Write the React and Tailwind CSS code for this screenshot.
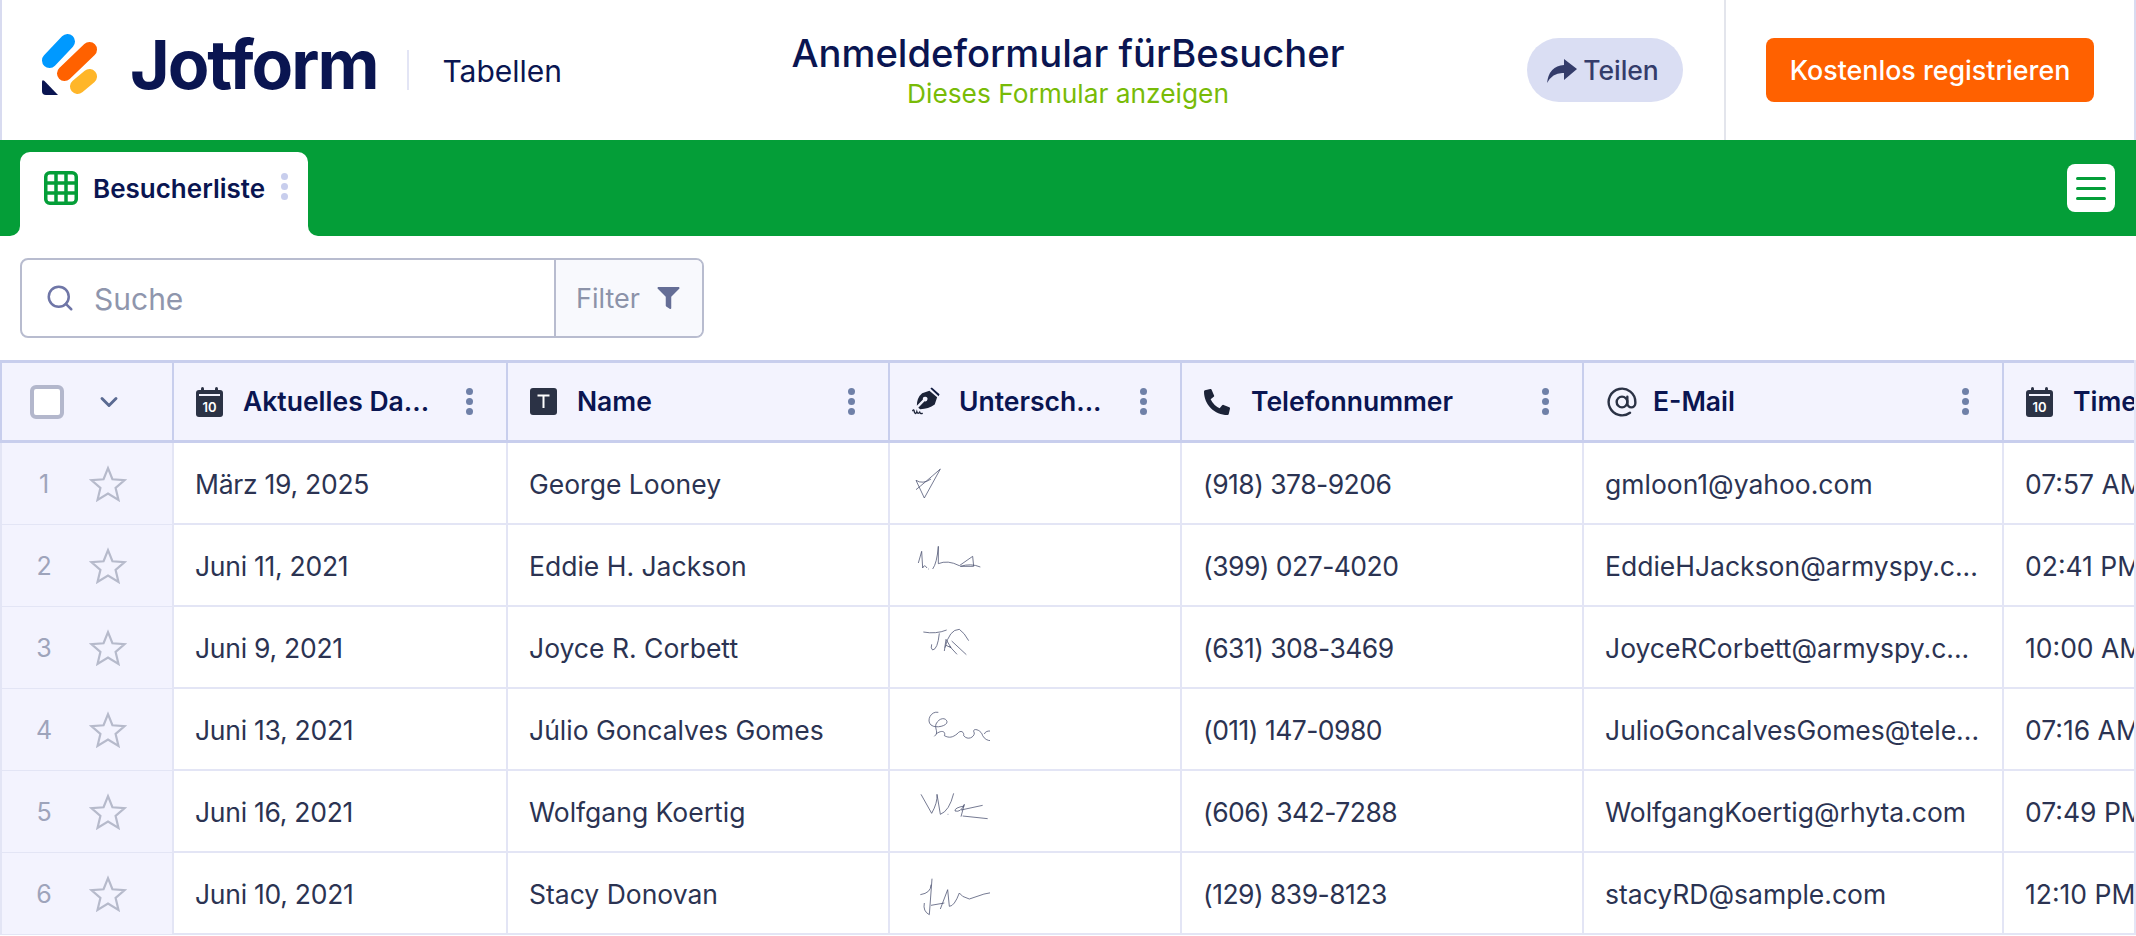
import React from "react";
import { Search, ChevronDown, AtSign } from "lucide-react";
import { FaFilter, FaPhoneAlt } from "react-icons/fa";

const gridCols = "grid grid-cols-[172px_334px_382px_292px_402px_420px_300px]";

const rows = [
  { date: "März 19, 2025", name: "George Looney", phone: "(918) 378-9206", email: "gmloon1@yahoo.com", time: "07:57 AM", sigBox: "27 10 300 243", sig: "M178 88 L130 175 L105 122 Q125 135 150 118 M105 150 Q130 130 178 88" },
  { date: "Juni 11, 2021", name: "Eddie H. Jackson", phone: "(399) 027-4020", email: "EddieHJackson@armyspy.c...", time: "02:41 PM", sigBox: "27 256 300 243", sig: "M112 370 L122 335 L125 385 Q130 372 138 385 M141 388 L143 388 M155 388 Q168 370 172 320 L172 372 Q200 360 235 378 L275 350 L278 380 L238 380 Q270 370 298 382" },
  { date: "Juni 9, 2021", name: "Joyce R. Corbett", phone: "(631) 308-3469", email: "JoyceRCorbett@armyspy.c...", time: "10:00 AM", sigBox: "27 503 300 243", sig: "M127 578 Q165 585 197 572 M175 582 Q170 630 155 632 Q148 628 152 615 M190 635 L195 600 L210 625 L195 618 M205 620 L228 645 M192 625 Q205 570 235 570 Q250 580 263 604 M212 605 L256 646" },
  { date: "Juni 13, 2021", name: "Júlio Goncalves Gomes", phone: "(011) 147-0980", email: "JulioGoncalvesGomes@tele...", time: "07:16 AM", sigBox: "27 30 300 243", sig: "M172 100 C150 95 135 125 150 138 C165 150 200 140 198 128 C195 115 175 115 165 135 C160 150 175 160 160 172 M165 165 C185 150 195 160 190 170 C205 178 215 175 228 165 C240 150 250 160 248 170 C260 185 280 175 280 162 C270 145 300 150 305 170 C315 190 345 190 348 170 C345 155 315 150 310 165" },
  { date: "Juni 16, 2021", name: "Wolfgang Koertig", phone: "(606) 342-7288", email: "WolfgangKoertig@rhyta.com", time: "07:49 PM", sigBox: "27 275 300 243", sig: "M120 345 L152 402 Q170 370 168 345 L178 405 Q205 395 218 342 M200 405 L202 405 M250 380 Q220 385 222 395 Q240 400 250 375 L240 412 M240 392 L305 378 M245 410 L320 418" },
  { date: "Juni 10, 2021", name: "Stacy Donovan", phone: "(129) 839-8123", email: "stacyRD@sample.com", time: "12:10 PM", sigBox: "27 520 300 243", sig: "M153 597 L145 705 Q125 695 130 670 M118 645 Q150 640 150 615 M150 677 L190 670 M178 688 L200 630 L205 680 Q220 680 235 640 L245 650 L265 658 Q310 640 350 635" },
];

const Logo = () => (
  <svg viewBox="0 0 55 61" className="w-[55px] h-[61px] shrink-0">
    <line x1="7.5" y1="26.5" x2="25.5" y2="7.5" stroke="#0099ff" strokeWidth="15" strokeLinecap="round" />
    <line x1="22.5" y1="39.5" x2="47.5" y2="15.5" stroke="#ff6100" strokeWidth="15" strokeLinecap="round" />
    <line x1="35.5" y1="52.5" x2="47.5" y2="42.5" stroke="#ffb629" strokeWidth="15" strokeLinecap="round" />
    <path d="M0 48 Q0 45 2.500 47 L16 61 H4 Q0 61 0 57 Z" fill="#0a1551" />
  </svg>
);

const CalendarIcon = () => (
  <svg viewBox="0 0 27 30" className="w-[27px] h-[30px] shrink-0">
    <rect x="0" y="3" width="27" height="27" rx="3" fill="#2b3245" />
    <rect x="5" y="0" width="3" height="6" rx="1.500" fill="#2b3245" />
    <rect x="19" y="0" width="3" height="6" rx="1.500" fill="#2b3245" />
    <rect x="3" y="7" width="21" height="2" fill="#f3f3fe" />
    <text x="13.500" y="25" textAnchor="middle" fontSize="13" fontWeight="600" fill="#fff" fontFamily="Inter, sans-serif">10</text>
  </svg>
);

const TextIcon = () => (
  <svg viewBox="0 0 27 27" className="w-[27px] h-[27px] shrink-0">
    <rect width="27" height="27" rx="3" fill="#2b3245" />
    <path d="M7.500 7.500 H19.500 M13.500 7.500 V20" stroke="#fff" strokeWidth="2" fill="none" />
  </svg>
);

const PenIcon = () => (
  <svg viewBox="0 0 30 30" className="w-[29px] h-[29px] shrink-0">
    <path d="M19 1.500 L20.500 0.500 L28.500 7.500 L27.500 9.500 Z" fill="#0f1a3f" />
    <path d="M18 4 L26 10.500 L23.500 18 Q17 22.500 8.500 23 L6.500 21.500 L13 14.800 A2.400 2.400 0 1 0 11.300 13 L5 19.500 Q5 11 10.500 6.500 Z" fill="#1c2338" />
    <path d="M0.500 25 Q2 22 2.500 26 Q4 29 5 25.500 Q6 28.500 8 26 Q9 28.500 11 27" stroke="#1c2338" strokeWidth="1.400" fill="none" />
  </svg>
);

const StarIcon = () => (
  <svg viewBox="0 0 24 24" className="w-[38px] h-[38px] shrink-0">
    <polygon
      points="12 2 14.800 9 22.500 9.600 16.800 14.500 18.600 22 12 18 5.400 22 7.200 14.500 1.500 9.600 9.200 9"
      fill="none"
      stroke="#b6bacb"
      strokeWidth="1.400"
    />
  </svg>
);

const Dots = ({ color = "bg-[#6f80a8]" }) => (
  <div className="flex flex-col gap-[3px] shrink-0">
    <span className={`w-[7px] h-[7px] rounded-full ${color}`} />
    <span className={`w-[7px] h-[7px] rounded-full ${color}`} />
    <span className={`w-[7px] h-[7px] rounded-full ${color}`} />
  </div>
);

const HeadCell = ({ icon, label }) => (
  <div className="flex items-center pl-[22px] pr-[33px] border-r-2 border-[#c8ceed] overflow-hidden">
    <div className="w-[47px] shrink-0">{icon}</div>
    <span className="flex-1 text-[26.5px] font-semibold text-[#0a1551] whitespace-nowrap">{label}</span>
    <Dots />
  </div>
);

const Cell = ({ children, className = "" }) => (
  <div className={`flex items-center pl-[21px] pt-[3px] border-r-2 border-[#e3e5f5] text-[26.5px] text-[#2b3352] whitespace-nowrap overflow-hidden ${className}`}>
    {children}
  </div>
);

const App = () => {
  return (
    <div className="w-[2136px] h-[936px] overflow-hidden bg-white font-['Inter',sans-serif]">
      {/* top bar */}
      <header className="h-[140px] grid grid-cols-[1fr_auto_1fr] items-center border-x-2 border-[#d8dbf0]">
        <div className="flex items-center pl-10 pb-3">
          <Logo />
          <span className="ml-[33px] text-[68px] font-bold leading-none tracking-[-0.03em] text-[#0a1551]">Jotform</span>
          <span className="ml-[30px] mt-[12px] w-[2px] h-10 bg-[#e3e5f5]" />
          <span className="ml-[33px] mt-[14px] text-[30px] text-[#0a1551]">Tabellen</span>
        </div>
        <div className="flex flex-col items-center gap-1 pb-[1px]">
          <span className="text-[38.2px] leading-[44px] font-medium text-[#0a1551]">Anmeldeformular fürBesucher</span>
          <span className="text-[26.3px] leading-[30px] text-[#78bb07]">Dieses Formular anzeigen</span>
        </div>
        <div className="flex items-center justify-end h-full">
          <button className="flex items-center justify-center gap-[6px] w-[156px] h-16 pr-1 pt-[1px] rounded-full bg-[#dadef3] text-[26.5px] font-medium text-[#343c6a]">
            <svg viewBox="0 0 30 24" className="w-[30px] h-6 shrink-0">
              <path d="M17 0 L30 10 L17 21 L17 14 Q6 13 0 24 Q2 7 17 6 Z" fill="#343c6a" />
            </svg>
            Teilen
          </button>
          <span className="ml-[41px] w-[2px] h-full bg-[#e3e5ec]" />
          <button className="ml-[40px] mr-[40px] w-[328px] h-16 rounded-lg bg-[#ff6100] text-[26.8px] font-medium text-white">
            Kostenlos registrieren
          </button>
        </div>
      </header>

      {/* green tab bar */}
      <div className="h-24 bg-[#049e38] flex items-end justify-between pl-5 pr-[21px]">
        <div className="relative w-[288px] h-[84px] bg-white rounded-t-[10px] flex items-center gap-[15px] pl-6 pb-[12px]">
          <span className="absolute -left-[10px] bottom-0 w-[10px] h-[10px] bg-white">
            <span className="block w-full h-full bg-[#049e38] rounded-br-[10px]" />
          </span>
          <span className="absolute -right-[10px] bottom-0 w-[10px] h-[10px] bg-white">
            <span className="block w-full h-full bg-[#049e38] rounded-bl-[10px]" />
          </span>
          <svg viewBox="0 0 34 34" className="w-[34px] h-[34px] shrink-0">
            <rect x="1.750" y="1.750" width="30.500" height="30.500" rx="4" fill="none" stroke="#049e38" strokeWidth="3.500" />
            <path d="M12 2 V32 M22 2 V32 M2 12 H32 M2 22 H32" stroke="#049e38" strokeWidth="3.500" />
          </svg>
          <span className="text-[26px] font-semibold text-[#0a1551]">Besucherliste</span>
          <div className="absolute right-5 top-[21px]">
            <Dots color="bg-[#c8ceed]" />
          </div>
        </div>
        <button className="mb-6 w-12 h-12 rounded-lg bg-white flex flex-col items-center justify-center gap-[7px]">
          <span className="w-[30px] h-[3px] rounded-full bg-[#049e38]" />
          <span className="w-[30px] h-[3px] rounded-full bg-[#049e38]" />
          <span className="w-[30px] h-[3px] rounded-full bg-[#049e38]" />
        </button>
      </div>

      {/* search */}
      <div className="h-[124px] pt-[22px] pl-5">
        <div className="w-[684px] h-[80px] flex rounded-lg border-2 border-[#b8bccf] overflow-hidden">
          <div className="flex-1 flex items-center pl-[23px] gap-[19px]">
            <Search className="w-[30px] h-[30px] text-[#6f76a7]" strokeWidth={2} />
            <span className="pt-[2px] text-[30px] text-[#8f96ad]">Suche</span>
          </div>
          <div className="w-[148px] bg-[#f8f9fd] border-l-2 border-[#b8bccf] flex items-center pl-[20px] gap-[17px]">
            <span className="pt-[2px] text-[27px] text-[#8c93a9]">Filter</span>
            <FaFilter className="w-[23px] h-[22px] text-[#656e96]" />
          </div>
        </div>
      </div>

      {/* table */}
      <div className="overflow-hidden border-r-2 border-[#e3e5f5]">
        <div className={`${gridCols} h-[83px] w-[2322px] bg-[#f3f3fe] border-y-[3px] border-l-2 border-[#c8ceed]`}>
          <div className="flex items-center pl-7 border-r-2 border-[#c8ceed]">
            <span className="w-[34px] h-[34px] bg-white rounded-md border-[4px] border-[#b3b7cc]" />
            <ChevronDown className="ml-[31px] w-7 h-7 text-[#5a6a92]" strokeWidth={2.5} />
          </div>
          <HeadCell icon={<CalendarIcon />} label="Aktuelles Da..." />
          <HeadCell icon={<TextIcon />} label="Name" />
          <HeadCell icon={<PenIcon />} label="Untersch..." />
          <HeadCell icon={<FaPhoneAlt className="w-[26px] h-[26px] text-[#1c2338]" />} label="Telefonnummer" />
          <HeadCell icon={<AtSign className="w-[32px] h-[32px] text-[#2b3245]" strokeWidth={1.800} />} label="E-Mail" />
          <HeadCell icon={<CalendarIcon />} label="Time" />
        </div>
        {rows.map((row, i) => (
          <div key={row.name} className={`${gridCols} h-[82px] w-[2322px] border-b-2 border-l-2 border-[#e3e5f5]`}>
            <div className="flex items-center bg-[#f3f3fe] border-r-2 border-[#e3e5f5]">
              <span className="w-[84px] pt-[2px] text-center text-[25px] text-[#9ea4bb]">{i + 1}</span>
              <span className="ml-[3px]">
                <StarIcon />
              </span>
            </div>
            <Cell className="tracking-[-0.01em]">{row.date}</Cell>
            <Cell>{row.name}</Cell>
            <div className="border-r-2 border-[#e3e5f5]">
              <svg viewBox={row.sigBox} className="w-[100px] h-[81px]">
                <path d={row.sig} fill="none" stroke="#4a5170" strokeWidth="2.300" />
              </svg>
            </div>
            <Cell className="tracking-[-0.02em]">{row.phone}</Cell>
            <Cell>{row.email}</Cell>
            <Cell>{row.time}</Cell>
          </div>
        ))}
      </div>
    </div>
  );
};

export default App;
